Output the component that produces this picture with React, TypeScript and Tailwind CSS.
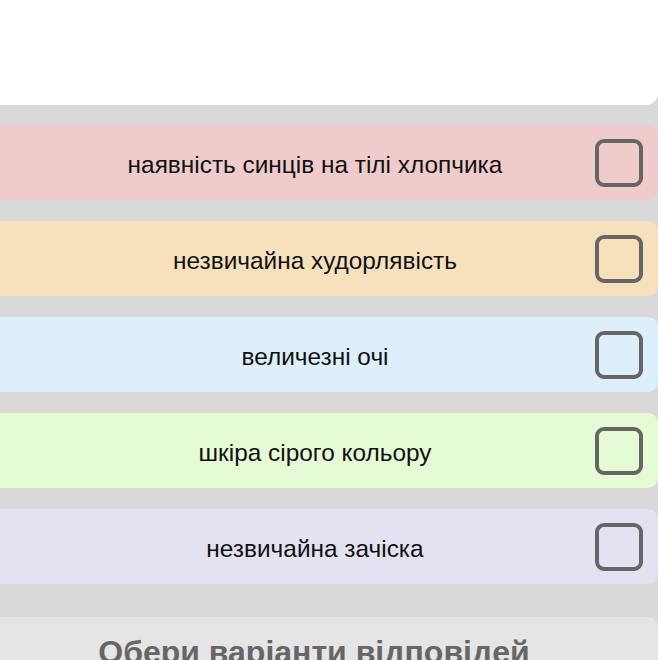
import React from "react";

const rows = [
  { text: "наявність синців на тілі хлопчика", bg: "bg-[#efcbcc]" },
  { text: "незвичайна худорлявість", bg: "bg-[#f7e1bd]" },
  { text: "величезні очі", bg: "bg-[#dceffa]" },
  { text: "шкіра сірого кольору", bg: "bg-[#e5fbd6]" },
  { text: "незвичайна зачіска", bg: "bg-[#e3e2f0]" },
];

export default function App() {
  return (
    <div
      className="w-[658px] h-[660px] overflow-hidden bg-[#d9d9d9] flex flex-col"
      style={{ fontFamily: '"Liberation Sans", Arial, sans-serif' }}
    >
      <div className="h-[105px] shrink-0 bg-white rounded-br-[12px]" />
      <div className="flex flex-col gap-[21px] pt-[20px]">
        {rows.map((r) => (
          <div
            key={r.text}
            className={`${r.bg} h-[75px] flex items-center pl-[35px] pr-[15px] rounded-r-[10px]`}
          >
            <span className="flex-1 text-center text-[24.4px] text-[#111] pt-[5px]">{r.text}</span>
            <div className="w-[48px] h-[48px] border-[4px] border-[#666] rounded-[9px] shrink-0" />
          </div>
        ))}
      </div>
      <div className="mt-[33px] flex-1 bg-[#e5e5e5] rounded-tr-[10px] flex justify-center pr-[30px] pt-[13px]">
        <span className="text-[32px] font-bold text-[#666] leading-[44px] whitespace-nowrap">Обери варіанти відповідей</span>
      </div>
    </div>
  );
}
